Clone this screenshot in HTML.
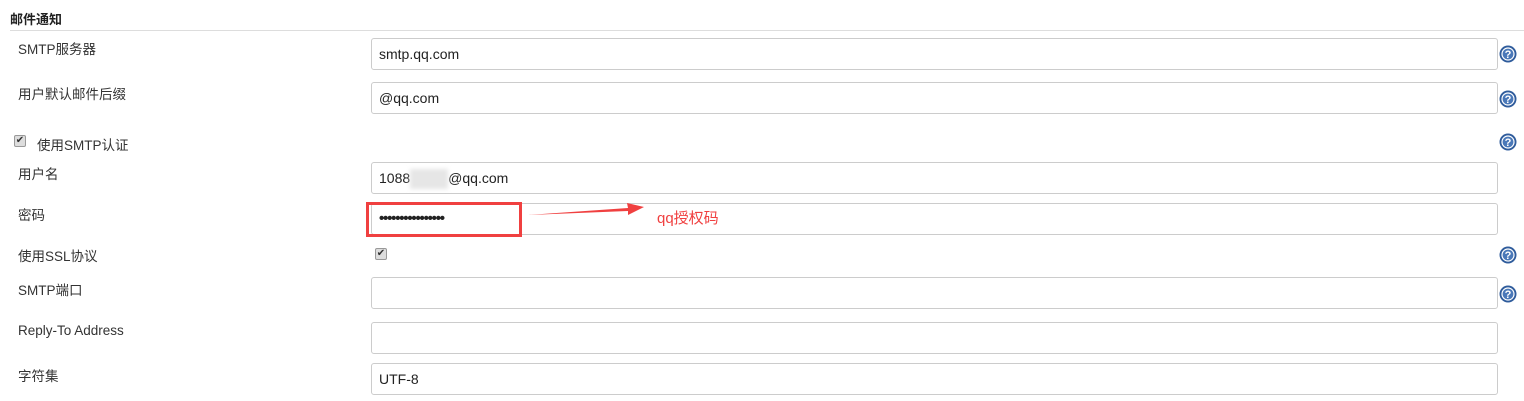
<!DOCTYPE html>
<html><head><meta charset="utf-8"><style>
body{margin:0;width:1524px;height:401px;background:#fff;position:relative;overflow:hidden;font-family:"Liberation Sans","Noto Sans CJK SC",sans-serif;font-size:13.5px;color:#333}
.a{position:absolute;white-space:nowrap}
.in{position:absolute;left:371px;width:1118px;height:30px;border:1px solid #ccc;border-radius:3px;background:#fff;font-size:14px;line-height:30px;padding-left:7px;box-sizing:content-box;color:#222}
.h{position:absolute;left:1499px;width:18px;height:18px}
.cb{position:absolute;width:10px;height:10px;border:1px solid #999;border-radius:2px;background:#ddd;font-size:10px;line-height:10px;text-align:center;color:#333}
</style></head><body>
<div class="a" style="left:10px;top:9px;font-weight:bold;font-size:13px;color:#222">邮件通知</div>
<div class="a" style="left:10px;top:30px;width:1514px;height:1px;background:#ddd"></div>

<div class="a" style="left:18px;top:38px">SMTP服务器</div>
<div class="in" style="top:38px">smtp.qq.com</div>
<div class="a" style="left:18px;top:83px">用户默认邮件后缀</div>
<div class="in" style="top:82px">@qq.com</div>
<div class="cb" style="left:14px;top:135px">✔</div>
<div class="a" style="left:37px;top:134px">使用SMTP认证</div>
<div class="a" style="left:18px;top:163px">用户名</div>
<div class="in" style="top:162px">1088<span style="display:inline-block;width:38px;height:20px;background:#e6e6e6;vertical-align:middle;filter:blur(2px)"></span>@qq.com</div>
<div class="a" style="left:18px;top:204px">密码</div>
<div class="in" style="top:203px;font-size:15px;letter-spacing:-1.2px;font-weight:bold">••••••••••••••••</div>
<div class="a" style="left:366px;top:202px;width:150px;height:29px;border:3px solid #f04040"></div>
<svg class="a" style="left:520px;top:196px" width="130" height="26"><polygon points="8,19 108,12 107,7 124,11 108,19 108,15" fill="#f04040"/></svg>
<div class="a" style="left:657px;top:207px;color:#f04040;font-size:15px">qq授权码</div>
<div class="a" style="left:18px;top:245px">使用SSL协议</div>
<div class="cb" style="left:375px;top:248px">✔</div>
<div class="a" style="left:18px;top:279px">SMTP端口</div>
<div class="in" style="top:277px"></div>
<div class="a" style="left:18px;top:323px">Reply-To Address</div>
<div class="in" style="top:322px"></div>
<div class="a" style="left:18px;top:365px">字符集</div>
<div class="in" style="top:363px">UTF-8</div>

<svg width="0" height="0" style="position:absolute"><defs><g id="q"><circle cx="9" cy="9" r="8.5" fill="#2f5c9c"/><circle cx="9" cy="9" r="6.6" fill="#fff"/><circle cx="9" cy="9" r="5.4" fill="#4a78b8"/><text x="9" y="13" font-size="11" font-weight="bold" fill="#fff" text-anchor="middle" font-family="Liberation Sans">?</text></g></defs></svg>
<svg class="h" style="top:45px"><use href="#q"/></svg>
<svg class="h" style="top:90px"><use href="#q"/></svg>
<svg class="h" style="top:133px"><use href="#q"/></svg>
<svg class="h" style="top:246px"><use href="#q"/></svg>
<svg class="h" style="top:285px"><use href="#q"/></svg>
</body></html>
